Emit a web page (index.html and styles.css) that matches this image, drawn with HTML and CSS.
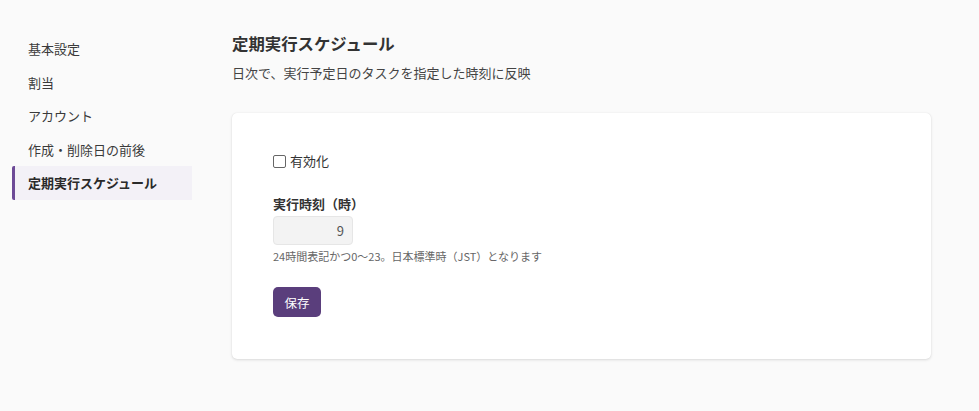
FILE: index.html
```html
<!DOCTYPE html>
<html lang="ja">
<head>
<meta charset="utf-8">
<link rel="stylesheet" href="styles.css">
</head>
<body>
<div class="layout">
  <nav class="side">
    <a class="item">基本設定</a>
    <a class="item">割当</a>
    <a class="item">アカウント</a>
    <a class="item">作成・削除日の前後</a>
    <a class="item active">定期実行スケジュール</a>
  </nav>
  <main class="main">
    <h1 class="title">定期実行スケジュール</h1>
    <p class="desc">日次で、実行予定日のタスクを指定した時刻に反映</p>
    <section class="card">
      <label class="check"><span class="box"></span>有効化</label>
      <div class="field">
        <div class="label">実行時刻（時）</div>
        <div class="input">9</div>
        <div class="hint">24時間表記かつ0～23。日本標準時（JST）となります</div>
      </div>
      <button class="btn">保存</button>
    </section>
  </main>
</div>
</body>
</html>
```
FILE: styles.css
```css
* { box-sizing: border-box; }
html, body { margin: 0; padding: 0; }
body {
  background: #fafafa;
  font-family: "Noto Sans CJK JP", "Noto Sans", sans-serif;
  color: #333;
  width: 979px;
  height: 411px;
  overflow: hidden;
}
.layout {
  display: flex;
  padding: 32px 0 0 12px;
}
.side {
  width: 180px;
  display: flex;
  flex-direction: column;
}
.item {
  display: block;
  height: 33.5px;
  line-height: 33.5px;
  padding-left: 13px;
  font-size: 13px;
  color: #3a3a3a;
  border-left: 3px solid transparent;
}
.item.active {
  background: #f3f1f7;
  border-left-color: #6d4a97;
  font-weight: 700;
  color: #2a2a2a;
  border-radius: 2px 0 0 2px;
}
.main {
  margin-left: 40px;
  width: 699px;
}
.title {
  margin: 0;
  font-size: 16.4px;
  font-weight: 700;
  line-height: 22px;
  color: #333;
}
.desc {
  margin: 9px 0 0;
  font-size: 13px;
  line-height: 20px;
  color: #444;
}
.card {
  margin-top: 30px;
  background: #fff;
  border-radius: 5px;
  box-shadow: 0 1px 3px rgba(0,0,0,0.13), 0 0 1px rgba(0,0,0,0.1);
  padding: 39px 41px 40px;
  height: 246px;
}
.check {
  display: flex;
  align-items: center;
  font-size: 13px;
  line-height: 18px;
  color: #333;
  gap: 4px;
}
.box {
  width: 13px;
  height: 13px;
  border: 1px solid #666;
  border-radius: 2px;
  background: #fff;
}
.field { margin-top: 25px; }
.label {
  font-size: 13px;
  font-weight: 700;
  line-height: 18px;
  color: #333;
}
.input {
  margin-top: 3px;
  width: 80px;
  height: 29px;
  background: #f3f3f3;
  border: 1px solid #e6e6e6;
  border-radius: 4px;
  text-align: right;
  padding-right: 8px;
  font-size: 13px;
  line-height: 27px;
  color: #555;
}
.hint {
  margin-top: 3px;
  font-size: 11px;
  line-height: 16px;
  color: #666;
}
.btn {
  margin-top: 23px;
  width: 48px;
  height: 30px;
  border: 0;
  border-radius: 5px;
  background: #5a3e7c;
  color: #fff;
  font-family: inherit;
  font-size: 12.5px;
  padding: 0;
}
```
